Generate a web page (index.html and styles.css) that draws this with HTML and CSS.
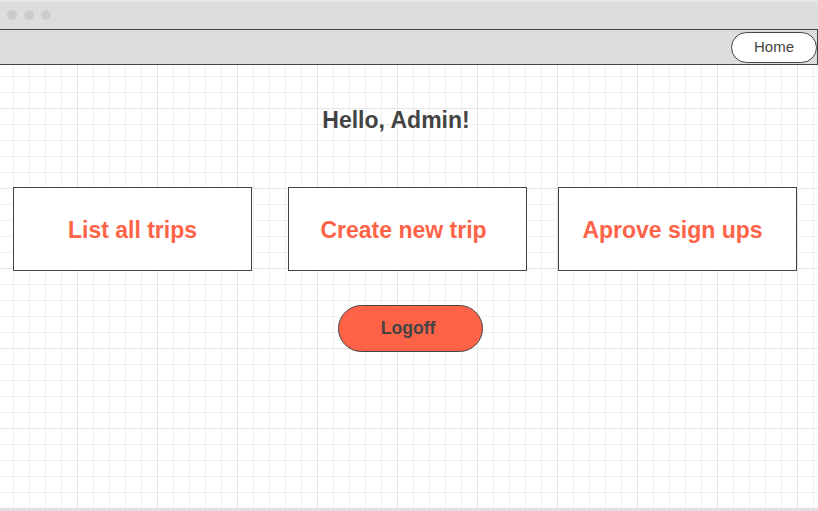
FILE: index.html
```html
<!DOCTYPE html>
<html>
<head>
<meta charset="utf-8">
<link rel="stylesheet" href="styles.css">
</head>
<body>
<div class="window">
  <div class="titlebar">
    <span class="dot"></span><span class="dot"></span><span class="dot"></span>
  </div>
  <nav class="nav">
    <button class="home">Home</button>
  </nav>
  <main class="main">
    <h1 class="hello">Hello, Admin!</h1>
    <div class="cards">
      <div class="card c1">List all trips</div>
      <div class="card c2">Create new trip</div>
      <div class="card c3">Aprove sign ups</div>
    </div>
    <div class="actions">
      <button class="logoff">Logoff</button>
    </div>
  </main>
  <div class="bottom"></div>
</div>
</body>
</html>
```

FILE: styles.css
```css
* { box-sizing: border-box; }
html, body { margin: 0; padding: 0; }
body {
  font-family: "Liberation Sans", Arial, sans-serif;
  color: #444;
  width: 818px;
  height: 511px;
  overflow: hidden;
  background: #fff;
}
.titlebar {
  height: 29px;
  background: #dddddd;
  border-top: 2px solid #e6e6e6;
  display: flex;
  align-items: center;
  gap: 7px;
  padding-left: 7px;
}
.dot {
  width: 10px;
  height: 10px;
  border-radius: 50%;
  background: #cccccc;
  margin-top: -2px;
}
.nav {
  height: 36px;
  background: #dddddd;
  border-top: 1px solid #444;
  border-bottom: 1px solid #444;
  border-right: 1px solid #444;
  display: flex;
  justify-content: flex-end;
  align-items: center;
}
.home {
  width: 86px;
  height: 31px;
  border: 1px solid #444;
  border-radius: 16px;
  background: #fff;
  font-family: "Liberation Sans", Arial, sans-serif;
  font-size: 15px;
  color: #444;
  padding: 0 0 2px 0;
  margin-top: 1px;
}
.main {
  height: 443px;
  background-color: #fff;
  background-image:
    linear-gradient(to right, #e5e5e5 1px, transparent 1px),
    linear-gradient(to bottom, #e5e5e5 1px, transparent 1px),
    linear-gradient(to right, #f1f1f1 1px, transparent 1px),
    linear-gradient(to bottom, #f1f1f1 1px, transparent 1px);
  background-size: 80px 80px, 80px 80px, 16px 16px, 16px 16px;
  background-position: 77px 43px, 77px 43px, 13px 11px, 13px 11px;
  padding-top: 42px;
}
.hello {
  margin: 0;
  text-align: center;
  font-size: 23px;
  line-height: 26px;
  font-weight: bold;
  color: #444;
  padding-right: 26px;
}
.cards {
  display: flex;
  margin-top: 54px;
}
.card {
  width: 239px;
  height: 84px;
  border: 1px solid #444;
  background: #fff;
  display: flex;
  align-items: center;
  justify-content: center;
  font-size: 23px;
  font-weight: bold;
  color: #ff6347;
  padding-top: 2px;
}
.c1 { margin-left: 13px; }
.c2 { margin-left: 36px; padding-right: 8px; }
.c3 { margin-left: 31px; padding-right: 10px; }
.actions {
  display: flex;
  justify-content: center;
  margin-top: 34px;
}
.logoff {
  width: 145px;
  height: 47px;
  border: 1px solid #444;
  border-radius: 24px;
  background: #ff6347;
  font-family: "Liberation Sans", Arial, sans-serif;
  font-size: 17.6px;
  font-weight: bold;
  color: #444;
  padding: 0 4px 0 0;
  margin-left: 2px;
}
.bottom {
  height: 3px;
  background: #e0e0e0;
}
```
